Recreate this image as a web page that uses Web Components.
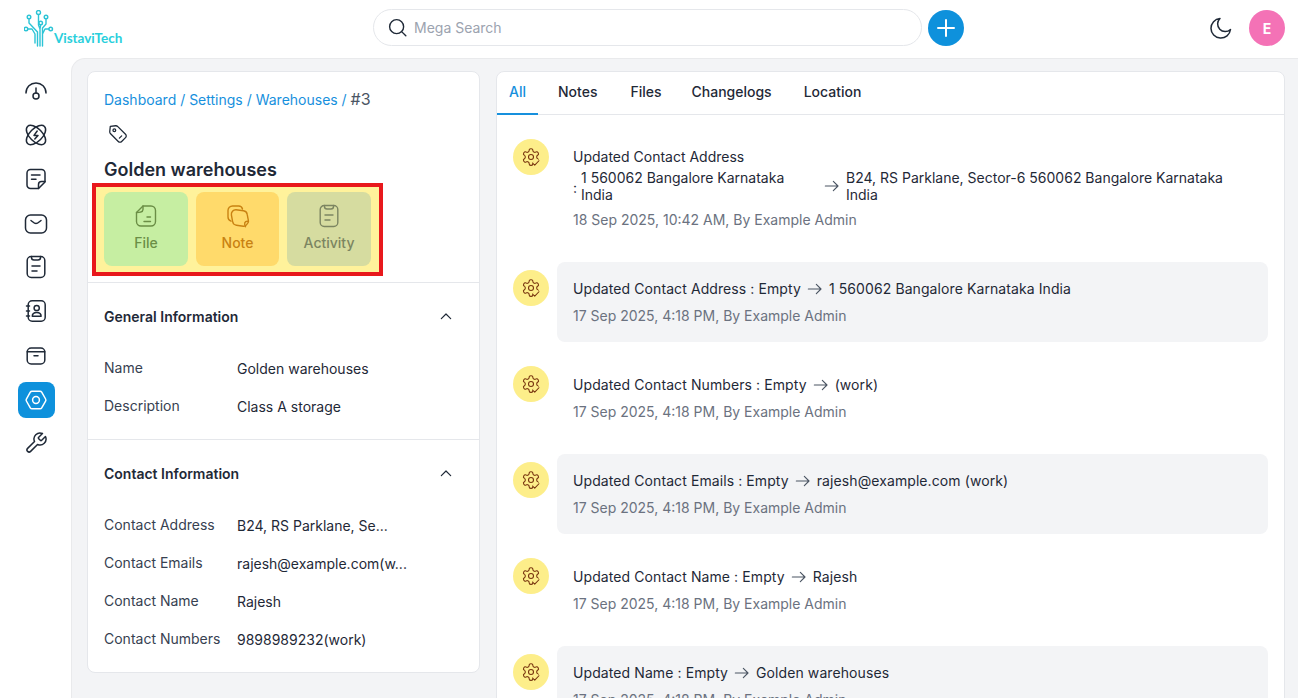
<!DOCTYPE html>
<html lang="en"><head><meta charset="utf-8"><title>Warehouse</title>
<style>
html,body{margin:0;height:100%;overflow:hidden;background:#fff;font-family:Inter,"Liberation Sans",sans-serif;font-size:14px;color:#1f2937}
body{display:flex;flex-direction:column;height:698px}
</style></head><body>
<app-header></app-header>
<app-layout>
  <app-rail slot="rail"></app-rail>
  <detail-card slot="left"></detail-card>
  <activity-panel slot="right">
    <feed-item><span slot="title">Updated Contact Address</span>
      <change-row></change-row>
      <span slot="date">18 Sep 2025, 10:42 AM, By Example Admin</span></feed-item>
    <feed-item shaded from="Updated Contact Address : Empty" to="1 560062 Bangalore Karnataka India"><span slot="date">17 Sep 2025, 4:18 PM, By Example Admin</span></feed-item>
    <feed-item from="Updated Contact Numbers : Empty" to="(work)"><span slot="date">17 Sep 2025, 4:18 PM, By Example Admin</span></feed-item>
    <feed-item shaded from="Updated Contact Emails : Empty" to="rajesh@example.com (work)"><span slot="date">17 Sep 2025, 4:18 PM, By Example Admin</span></feed-item>
    <feed-item from="Updated Contact Name : Empty" to="Rajesh"><span slot="date">17 Sep 2025, 4:18 PM, By Example Admin</span></feed-item>
    <feed-item shaded from="Updated Name : Empty" to="Golden warehouses"><span slot="date">17 Sep 2025, 4:18 PM, By Example Admin</span></feed-item>
  </activity-panel>
</app-layout>
<script>
const P={
gauge:'<path d="M2 14C2 8 6.5 4 12 4s10 4 10 10"/><path d="M12 9v5"/><circle cx="12" cy="17" r="3"/>',
atom:'<ellipse cx="12" cy="12" rx="12" ry="6.4" transform="rotate(45 12 12)"/><ellipse cx="12" cy="12" rx="12" ry="6.4" transform="rotate(-45 12 12)"/><path d="M13.2 8 10 12.4h4L10.8 16"/>',
note:'<path d="M6.5 2.5h11A3.5 3.5 0 0 1 21 6v9l-6.5 6.5h-8A3.5 3.5 0 0 1 3 18V6a3.5 3.5 0 0 1 3.5-3.5z"/><path d="M21 14.5h-3.5a3 3 0 0 0-3 3v4"/><path d="M7.5 8h8.500M7.5 12.2h4.500"/>',
mail:'<rect x="1.5" y="4" width="21" height="18" rx="5"/><path d="M7 9.500c2 1.500 3.400 3 5 3s3-1.500 5-3"/>',
clip:'<rect x="3.2" y="1.500" width="17.600" height="21" rx="4"/><path d="M7.500 1.500v1a2.500 2.500 0 0 0 2.500 2.500h4a2.500 2.500 0 0 0 2.500-2.500v-1"/><path d="M8 11h8M8 16h5"/>',
book:'<rect x="4.200" y="1.800" width="17" height="20.400" rx="4"/><circle cx="12.700" cy="9" r="2.600"/><path d="M8.300 17.300c0-2.600 2-3.800 4.400-3.800s4.400 1.200 4.400 3.800z"/><path d="M2.500 7h3M2.500 12h3M2.500 17h3"/>',
box:'<rect x="3.200" y="5" width="17.600" height="16" rx="4"/><path d="M3.200 8.800h17.600M10 12.800h4"/>',
hex:'<path d="M8 3.200h8a2 2 0 0 1 1.700 1l3.900 6.800a2 2 0 0 1 0 2l-3.900 6.800a2 2 0 0 1-1.700 1H8a2 2 0 0 1-1.700-1L2.400 13a2 2 0 0 1 0-2l3.900-6.800a2 2 0 0 1 1.700-1z"/><circle cx="12" cy="12" r="3.400"/>',
wrench:'<path d="M14.700 6.300a1 1 0 0 0 0 1.400l1.600 1.600a1 1 0 0 0 1.400 0l3.770-3.770a6 6 0 0 1-7.940 7.940l-6.910 6.910a2.120 2.120 0 0 1-3-3l6.910-6.910a6 6 0 0 1 7.940-7.940l-3.760 3.760z"/>',
moon:'<path d="M11 2.500a7.600 7.600 0 0 0 10.500 11A9.800 9.800 0 1 1 11 2.500z"/>',
search:'<circle cx="11" cy="11" r="8"/><path d="m17 17 4.500 4.500"/>',
plus:'<path d="M12 4v16M4 12h16"/>',
tag:'<path d="M3.600 3.600 9.400 3a3 3 0 0 1 2.400.9l8.400 8.400a2.600 2.600 0 0 1 0 3.700l-4.200 4.200a2.600 2.600 0 0 1-3.700 0L3.900 11.800A3 3 0 0 1 3 9.400z"/><circle cx="8" cy="8" r="1.500"/><path d="m13.500 16.500 2.500-2.500"/>',
file:'<path d="M9 2H17A4.500 4.500 0 0 1 21.500 6.500v11A4.500 4.500 0 0 1 17 22H7A4.500 4.500 0 0 1 2.500 17.500V8.500z"/><path d="M2.500 8.500C5 8.500 9 8.500 9 5.500V2"/><path d="M13 13h3.500M10 17.500h6.500"/>',
stack:'<path d="M16.500 5A4 4 0 0 0 12.500 2H6.500A4.500 4.500 0 0 0 2 6.500v6.500a4.500 4.500 0 0 0 3 4.200"/><path d="M10 5.800 17.500 6.800a4.300 4.300 0 0 1 3.700 3.600l1.200 6.200c.2 1-.1 2-.8 2.800l-1.400 1.700c-.7.800-1.700 1.200-2.800 1.100l-7-1a4.500 4.500 0 0 1-3.800-3.700L5.400 11A4.500 4.500 0 0 1 10 5.800z"/><path d="M22.400 17.500c-1.800-.8-4 .4-3.700 2.700.1.800.5 1.500.8 2.500"/>',
gear:'<path d="M12.220 2h-.44a2 2 0 0 0-2 2v.18a2 2 0 0 1-1 1.730l-.43.25a2 2 0 0 1-2 0l-.15-.08a2 2 0 0 0-2.730.73l-.22.38a2 2 0 0 0 .73 2.730l.15.1a2 2 0 0 1 1 1.720v.51a2 2 0 0 1-1 1.740l-.15.09a2 2 0 0 0-.73 2.730l.22.38a2 2 0 0 0 2.730.73l.15-.08a2 2 0 0 1 2 0l.43.25a2 2 0 0 1 1 1.730V20a2 2 0 0 0 2 2h.44a2 2 0 0 0 2-2v-.18a2 2 0 0 1 1-1.730l.43-.25a2 2 0 0 1 2 0l.15.08a2 2 0 0 0 2.730-.73l.22-.39a2 2 0 0 0-.73-2.730l-.15-.08a2 2 0 0 1-1-1.740v-.5a2 2 0 0 1 1-1.740l.15-.09a2 2 0 0 0 .73-2.730l-.22-.38a2 2 0 0 0-2.730-.73l-.15.08a2 2 0 0 1-2 0l-.43-.25a2 2 0 0 1-1-1.730V4a2 2 0 0 0-2-2z"/><circle cx="12" cy="12" r="3"/><circle cx="18.500" cy="18.500" r="4" fill="#fdee8a" stroke="none"/><path d="m14.500 20 2 1.800 5-5.300"/>',
up:'<path d="m5 16 7-7 7 7"/>',
arrow:'<path d="M2 12h19M14 5l7 7-7 7"/>'
};
function def(name,css,html){customElements.define(name,class extends HTMLElement{
  connectedCallback(){if(this.shadowRoot)return;const r=this.attachShadow({mode:'open'});
    r.innerHTML='<style>'+css+'</style>'+(typeof html==='function'?html(this):html);}
});}
def('x-icon',':host{display:inline-flex;flex:none}svg{display:block;fill:none;stroke:currentColor;stroke-linecap:round;stroke-linejoin:round}',
 h=>{const s=h.getAttribute('size')||24,w=h.getAttribute('w')||1.5;return `<svg width="${s}" height="${s}" viewBox="0 0 24 24" stroke-width="${w}">${P[h.getAttribute('name')]}</svg>`});

def('app-logo',':host{display:flex;align-items:flex-end}svg{display:block;fill:none;stroke:#2cc4d6;stroke-width:1.4;stroke-linecap:round;stroke-linejoin:round}span{font:700 13.5px/14px Lato,"Liberation Sans",sans-serif;color:#2acfdc;margin:0 0 2px -2px;letter-spacing:-.05px}',
`<svg width="32" height="37" viewBox="0 0 32 37"><circle cx="14.500" cy="2.500" r="2"/><circle cx="5" cy="7" r="1.800"/><circle cx="22" cy="7" r="1.800"/><circle cx="2" cy="19" r="1.800"/><circle cx="16.700" cy="13" r="1.800"/><circle cx="26.700" cy="19" r="1.800"/><path d="M5 8.800V13l8.500 9v14M14.500 4.500V15l1.500 4v17M16.700 14.800 16 19M22 8.800V14l-3.500 4v18M3.800 19H8l3 5v9M25 19h-4l-2.500 5"/></svg><span>VistaviTech</span>`);

def('app-header',`:host{display:flex;align-items:center;height:58px;flex:none;box-sizing:border-box;padding:0 13px 2px 24px;background:#fff}
app-logo{width:349px;align-self:flex-start;margin-top:10px}
.s{box-sizing:border-box;width:549px;height:37px;margin-top:-1px;border:1px solid #e5e7eb;border-radius:19px;display:flex;align-items:center;gap:6px;padding-left:13px;color:#1f2937}
.s span{color:#9ca3af;font-size:14px}
.p{width:36px;height:36px;border-radius:50%;background:#0e91dc;color:#fff;margin-left:6px;display:flex;align-items:center;justify-content:center}
.r{margin-left:auto;display:flex;align-items:center;gap:16px}
.a{width:36px;height:36px;border-radius:50%;background:#f472b6;color:#fff;font-weight:700;font-size:14px;display:flex;align-items:center;justify-content:center}`,
`<app-logo></app-logo><div class="s"><x-icon name="search" size="21" w="1.6"></x-icon><span>Mega Search</span></div>
<div class="p"><x-icon name="plus" size="24" w="2"></x-icon></div>
<div class="r"><x-icon name="moon" size="24" w="1.5"></x-icon><div class="a">E</div></div>`);

def('rail-item',`:host{display:flex;width:37px;height:36px;align-items:center;justify-content:center;border-radius:8px;color:#1f2937}
:host([active]){background:#0e91dc;color:#fff;margin:1px 0 -1px}`,h=>`<x-icon name="${h.getAttribute('name')}" size="24" w="1.5"></x-icon>`);
def('app-rail',':host{display:flex;flex-direction:column;align-items:center;gap:8px;padding-top:15px;width:71px;box-sizing:border-box;padding-left:1px;flex:none;background:#fff}',
['gauge','atom','note','mail','clip','book','box','hex','wrench'].map(n=>`<rail-item name="${n}" ${n==='hex'?'active':''}></rail-item>`).join(''));

def('app-layout',`:host{display:flex;flex:1;min-height:0}
.m{flex:1;display:flex;gap:16px;align-items:flex-start;padding:12px 13px 0 15px;background:#f3f4f6;border:1px solid #e9eaec;border-width:1px 0 0 1px;border-top-left-radius:14px;overflow:hidden;min-width:0}`,
`<slot name="rail"></slot><div class="m"><slot name="left"></slot><slot name="right"></slot></div>`);

def('action-tile',`:host{display:flex;flex-direction:column;align-items:center;gap:6px;padding-top:12px;box-sizing:border-box;height:74px;border-radius:8px;font-size:14px;font-weight:500;background:var(--b);color:var(--c)}
.w{height:24px;display:flex;align-items:center;justify-content:center}`,
h=>`<div class="w"><x-icon name="${h.getAttribute('name')}" size="24" w="1.4"></x-icon></div><span>${h.getAttribute('label')}</span>`);

def('info-row',`:host{display:flex;height:38px;align-items:center;font-size:14px;color:#374151}
.l{width:133px;flex:none;white-space:nowrap;position:relative;top:-1px}.v{color:#1f2937;white-space:nowrap}`,
h=>`<span class="l">${h.getAttribute('label')}</span><span class="v">${h.getAttribute('value')}</span>`);

def('info-section',`:host{display:block;border-top:1px solid #e5e7eb;padding:0 16px 14px}
.h{display:flex;justify-content:space-between;align-items:center;height:66px;font-weight:600;font-size:14px;padding-right:9px;color:#1f2937}
.b{display:flex;flex-direction:column}`,
h=>`<div class="h"><span>${h.getAttribute('heading')}</span><x-icon name="up" size="16" w="1.8"></x-icon></div><div class="b"><slot></slot></div>`);

def('detail-card',`:host{display:block;width:393px;height:602px;box-sizing:border-box;flex:none;background:#fff;border:1px solid #e5e7eb;border-radius:8px;color:#1f2937;overflow:hidden}
.t{padding:15px 16px 0}
.c{color:#1790dd;font-size:14px;line-height:24px;display:block}.c b{font-weight:400;font-size:16px;color:#4b5563}
.g{display:block;margin-top:11px;margin-left:3px;height:24px}
h1{font-size:18px;font-weight:600;line-height:28px;margin:9px 0 0;color:#1f2937;white-space:nowrap}
.mark{margin:-1px 0 6px -12px;width:291px;height:93px;box-sizing:border-box;border:4px solid #e8181c;background:#fff29b;display:grid;grid-template-columns:84px 83px 84px;gap:8px;padding:5px 8px 0}`,
`<div class="t"><span class="c">Dashboard / Settings / Warehouses / <b>#3</b></span>
<span class="g"><x-icon name="tag" size="22" w="1.4"></x-icon></span>
<h1>Golden warehouses</h1>
<div class="mark">
<action-tile name="file" label="File" style="--b:#c6eea2;--c:#6b8e46"></action-tile>
<action-tile name="stack" label="Note" style="--b:#ffda6b;--c:#c98212"></action-tile>
<action-tile name="clip" label="Activity" style="--b:#d6dca0;--c:#7c8561"></action-tile>
</div></div>
<info-section heading="General Information">
<info-row label="Name" value="Golden warehouses"></info-row>
<info-row label="Description" value="Class A storage"></info-row>
</info-section>
<info-section heading="Contact Information">
<info-row label="Contact Address" value="B24, RS Parklane, Se..."></info-row>
<info-row label="Contact Emails" value="rajesh@example.com(w..."></info-row>
<info-row label="Contact Name" value="Rajesh"></info-row>
<info-row label="Contact Numbers" value="9898989232(work)"></info-row>
</info-section>`);

def('activity-panel',`:host{display:block;flex:1;min-width:0;background:#fff;border:1px solid #e5e7eb;border-radius:8px 8px 0 0;height:800px}
nav{display:flex;gap:8px;height:42px;border-bottom:1px solid #e5e7eb;font-size:14px;font-weight:500;color:#1f2937}
nav a{padding:0 12px 3px;display:flex;align-items:center;position:relative}
nav a.on{color:#1790dd}
nav a.on::after{content:"";position:absolute;left:0;right:0;bottom:-1px;height:2px;background:#1790dd}
nav a.n{margin:0 -2px 0 1px}
.f{display:flex;flex-direction:column;gap:16px;padding:16px 16px 0}`,
`<nav><a class="on">All</a><a>Notes</a><a class="n">Files</a><a>Changelogs</a><a>Location</a></nav><div class="f"><slot></slot></div>`);

def('change-row',`:host{display:flex;align-items:center;line-height:17px;margin-top:1px;color:#1f2937}
.k{width:8px;flex:none;position:relative;top:1px}.a{width:235px;flex:none}
x-icon{margin:0 6px 0 8px;color:#4b5563}.b{width:394px}`,
`<span class="k">:</span><span class="a">1 560062 Bangalore Karnataka India</span><x-icon name="arrow" size="16" w="1.7"></x-icon><span class="b">B24, RS Parklane, Sector-6 560062 Bangalore Karnataka India</span>`);

def('feed-item',`:host{display:flex;gap:8px;align-items:flex-start;flex:none}
.i{width:36px;height:36px;border-radius:50%;background:#fdee8a;color:#78350f;flex:none;display:flex;align-items:center;justify-content:center;margin-top:8px}
.c{flex:1;padding:17px 16px 16px;border-radius:8px;min-width:0}
:host([shaded]) .c{background:#f3f4f6}
.t{line-height:20px;height:20px;color:#1f2937;display:flex;align-items:center;gap:6px;letter-spacing:.09px}
.t ::slotted(span){position:relative;top:-1px;letter-spacing:0}
.t x-icon{color:#4b5563}
.d{margin-top:7px;line-height:20px;color:#6b7280}`,
h=>{const f=h.getAttribute('from'),to=h.getAttribute('to');
 return `<div class="i"><x-icon name="gear" size="20" w="1.3"></x-icon></div><div class="c"><div class="t">${f?`<span>${f}</span><x-icon name="arrow" size="16" w="1.7"></x-icon><span>${to}</span>`:'<slot name="title"></slot>'}</div><slot></slot><div class="d"><slot name="date"></slot></div></div>`});
</script>
</body></html>
